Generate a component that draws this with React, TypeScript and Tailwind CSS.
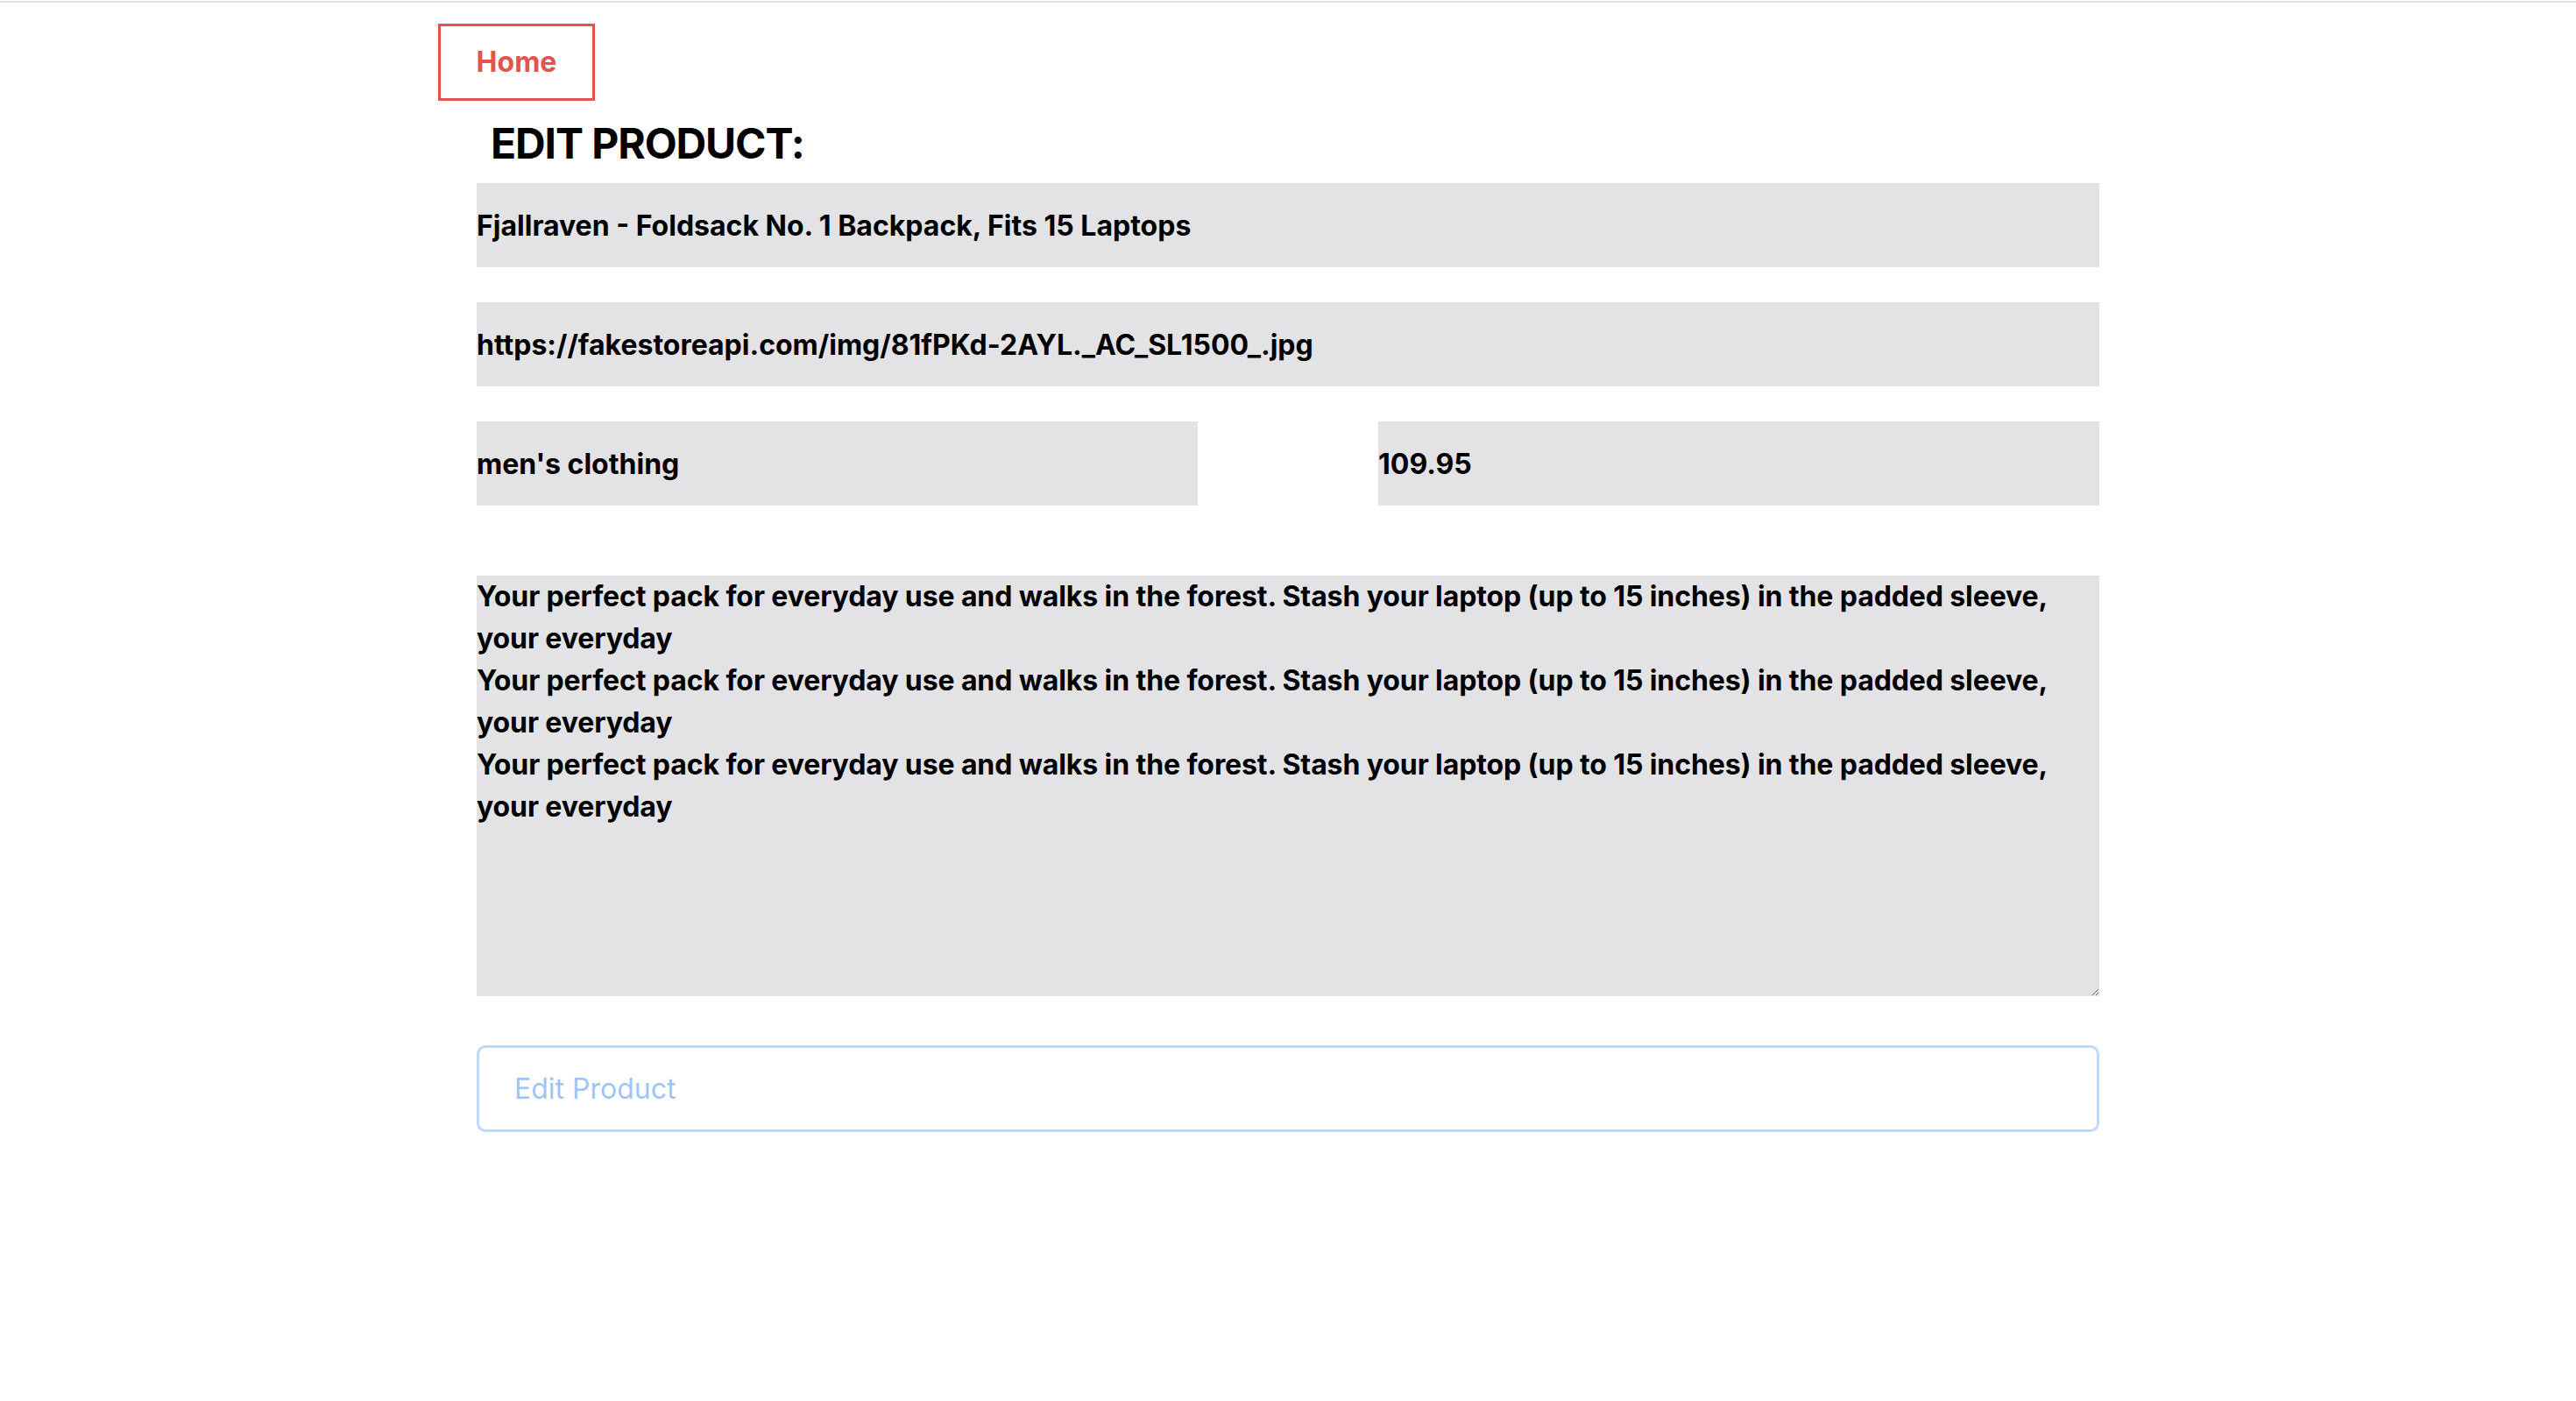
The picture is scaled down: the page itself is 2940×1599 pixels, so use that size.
import { useState } from "react";

const desc =
  "Your perfect pack for everyday use and walks in the forest. Stash your laptop (up to 15 inches) in the padded sleeve,\nyour everyday";

export default function App() {
  const [title, setTitle] = useState("Fjallraven - Foldsack No. 1 Backpack, Fits 15 Laptops");
  const [image, setImage] = useState("https://fakestoreapi.com/img/81fPKd-2AYL._AC_SL1500_.jpg");
  const [category, setCategory] = useState("men's clothing");
  const [price, setPrice] = useState("109.95");
  const [description, setDescription] = useState([desc, desc, desc].join("\n"));

  const field =
    "h-[96px] bg-[#e3e3e6] text-[32px] font-bold text-black outline-none px-0";

  return (
    <div className="min-h-screen bg-white font-['Inter','Liberation_Sans',sans-serif]">
      {/* thin line along the top */}
      <div className="h-[3px] border-b-2 border-[#e3e3e3]" />

      <div className="mx-auto w-[1940px] pt-[24px]">
        <button
          type="button"
          className="flex h-[88px] w-[179px] items-center justify-center border-[3px] border-[#e2544f] text-[32px] font-bold text-[#e2544f]"
        >
          Home
        </button>

        <div className="mx-[44px]">
          <h1 className="mt-[25px] pl-[16px] text-[48px] font-bold leading-none tracking-[-1.1px] text-black">
            EDIT PRODUCT:
          </h1>

          <form
            className="mt-[21px] flex flex-col"
            onSubmit={(e) => e.preventDefault()}
          >
            <input
              className={`${field} w-full`}
              value={title}
              onChange={(e) => setTitle(e.target.value)}
            />
            <input
              className={`${field} mt-[40px] w-full`}
              value={image}
              onChange={(e) => setImage(e.target.value)}
            />
            <div className="mt-[40px] flex justify-between">
              <input
                className={`${field} w-[823px]`}
                value={category}
                onChange={(e) => setCategory(e.target.value)}
              />
              <input
                className={`${field} w-[823px]`}
                value={price}
                onChange={(e) => setPrice(e.target.value)}
              />
            </div>

            <textarea
              className="mt-[80px] h-[480px] w-full resize bg-[#e3e3e6] p-0 text-[32px] font-bold leading-[48px] tracking-[-0.1px] text-black outline-none"
              value={description}
              onChange={(e) => setDescription(e.target.value)}
            />

            <button
              type="submit"
              className="mt-[56px] h-[99px] w-full rounded-[10px] border-[3px] border-[#bfd9fa] bg-white pl-[40px] text-left text-[32px] text-[#9fc5f8]"
            >
              Edit Product
            </button>
          </form>
        </div>
      </div>
    </div>
  );
}
